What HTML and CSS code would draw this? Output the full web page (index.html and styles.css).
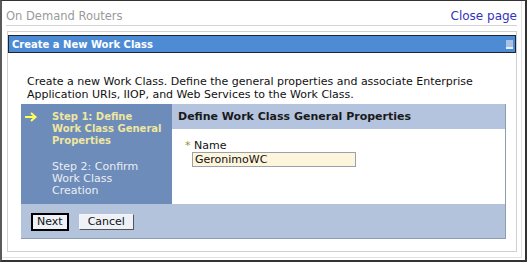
FILE: index.html
```html
<!DOCTYPE html>
<html lang="en">
  <head>
    <meta charset="UTF-8" />
    <title>Create a New Work Class</title>
    <link rel="stylesheet" href="styles.css">
  </head>
  <body>
    <div class="page">
      <div class="topbar">
        <span class="crumb">On Demand Routers</span>
        <a class="close" href="#">Close page</a>
      </div>
      <section class="panel">
        <div class="titlebar">
          <span>Create a New Work Class</span>
          <span class="minimize"></span>
        </div>
        <div class="panelBody">
          <p class="intro">Create a new Work Class. Define the general properties and associate Enterprise Application URIs, IIOP, and Web Services to the Work Class.</p>
          <div class="wizard">
            <div class="wizMain">
              <div class="steps">
                <div class="step current">
                  <span class="arrow">
                    <svg width="12" height="10" viewBox="0 0 12 10">
                      <path d="M0 5H10M6 1L10.5 5L6 9" fill="none" stroke="#ffff55" stroke-width="2"/>
                    </svg>
                  </span>
                  <span class="stepText">Step 1: Define Work Class General Properties</span>
                </div>
                <div class="step">
                  <span class="arrow"></span>
                  <span class="stepText">Step 2: Confirm Work Class Creation</span>
                </div>
              </div>
              <div class="content">
                <h2>Define Work Class General Properties</h2>
                <div class="field">
                  <label for="name"><span class="req">*</span> Name</label>
                  <input type="text" id="name" value="GeronimoWC" />
                </div>
              </div>
            </div>
            <div class="buttons">
              <button class="btn focused">Next</button>
              <button class="btn">Cancel</button>
            </div>
          </div>
        </div>
      </section>
    </div>
  </body>
</html>
```

FILE: styles.css
```css
html,
body {
  height: 100%;
}
body {
  margin: 0;
  box-sizing: border-box;
  background-color: #fff;
  border-top: 1px solid #333;
  border-left: 2px solid #5a5a5a;
  border-right: 2px solid #333;
  border-bottom: 2px solid #333;
  font-family: "DejaVu Sans", Verdana, sans-serif;
  font-size: 11px;
  color: #111;
}
.page {
  height: 257px;
  margin-right: 3px;
  padding: 0 4px 0 4px;
  border-right: 1px solid #e2e2e2;
  border-bottom: 1px solid #e2e2e2;
  box-sizing: border-box;
}
.topbar {
  display: flex;
  justify-content: space-between;
  align-items: flex-end;
  height: 25px;
  padding-bottom: 2px;
  box-sizing: border-box;
  border-bottom: 1px solid #d4d4d4;
}
.crumb {
  font-size: 11.5px;
  color: #9a9a9a;
}
.close {
  font-size: 12px;
  color: #3333bb;
  text-decoration: none;
}
.panel {
  margin: 5px 0 0 1px;
  border: 1px solid #d0d0d0;
  padding-top: 3px;
  padding-bottom: 12px;
}
.titlebar {
  display: flex;
  justify-content: space-between;
  align-items: center;
  height: 18px;
  box-sizing: border-box;
  border: 1px solid #1c2433;
  background-color: #4d8cd5;
  color: #fff;
  font-weight: bold;
  font-size: 10px;
  padding: 0 2px 0 3px;
}
.minimize {
  width: 7px;
  height: 9px;
  background-color: #a9c2e4;
  border-bottom: 2px solid #e8f0fa;
  box-sizing: border-box;
}
.panelBody {
  padding: 0 10px 0 13px;
}
.intro {
  margin: 22px 0 3px 0;
  padding-left: 6px;
  line-height: 13px;
}
.wizard {
  border-right: 1px solid #8e9cb6;
  border-bottom: 1px solid #8e9cb6;
}
.wizMain {
  display: flex;
}
.steps {
  width: 151px;
  height: 100px;
  background-color: #6d8cb9;
  color: #e9eef6;
  padding-top: 7px;
  box-sizing: border-box;
}
.step {
  display: flex;
  line-height: 12px;
  margin-bottom: 14px;
}
.stepText {
  width: 100px;
}
.step.current {
  color: #efe6a0;
  font-weight: bold;
  font-size: 10px;
}
.step.current .stepText {
  width: 111px;
}
.arrow {
  width: 31px;
  flex: none;
  padding-left: 4px;
  box-sizing: border-box;
  padding-top: 1px;
}
.content {
  flex: 1;
}
.content h2 {
  margin: 0;
  height: 25px;
  line-height: 25px;
  background-color: #b4c4de;
  font-size: 11px;
  padding-left: 6px;
  color: #1a1a1a;
}
.field {
  padding: 11px 0 0 13px;
}
.field label {
  display: block;
  line-height: 12px;
}
.req {
  color: #a09020;
}
.field input {
  display: block;
  margin-left: 7px;
  width: 164px;
  height: 15px;
  box-sizing: border-box;
  border: 1px solid #9aa0ac;
  background-color: #fdf5dc;
  font-family: "DejaVu Sans", Verdana, sans-serif;
  font-size: 11px;
  padding: 0 2px;
  color: #111;
}
.buttons {
  display: flex;
  align-items: center;
  gap: 10px;
  height: 34px;
  padding: 2px 0 0 10px;
  box-sizing: border-box;
  background-color: #b3c3dc;
}
.btn {
  font-family: "DejaVu Sans", Verdana, sans-serif;
  font-size: 11px;
  height: 16px;
  padding: 0 8px;
  background-color: #eef1f7;
  border: 1px solid;
  border-color: #f4f4f4 #555 #555 #f4f4f4;
  color: #111;
  line-height: 14px;
}
.btn.focused {
  height: 18px;
  padding: 0 4px;
  border: 2px solid #000;
}
```
